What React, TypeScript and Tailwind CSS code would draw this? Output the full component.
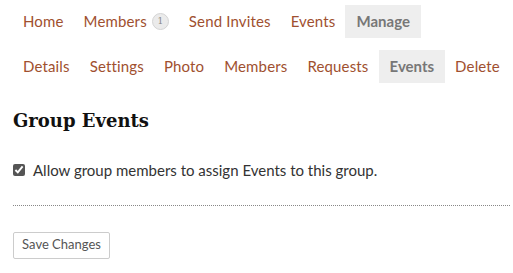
import React from "react";

const sans = "font-['Lato','Liberation_Sans',sans-serif]";

function NavItem({ label, active = false, children }: { label: string; active?: boolean; children?: React.ReactNode }) {
  return (
    <a
      className={
        active
          ? "flex h-[33px] items-center bg-[#eeeeee] px-[11px] font-bold text-[#777777]"
          : "flex h-[33px] items-center px-[10px] tracking-[0.15px] text-[#a0502f]"
      }
    >
      {label}
      {children}
    </a>
  );
}

export default function App() {
  return (
    <div className={`${sans} w-[513px] h-[273px] bg-white text-[15px] pl-[13px] pr-[3px]`}>
      <nav className="flex items-center pt-[5px] h-[38px]">
        <NavItem label="Home" />
        <NavItem label="Members">
          <span className="ml-[5px] flex h-[17px] w-[17px] items-center justify-center rounded-full border border-[#d4d4d4] bg-[#ebebeb] text-[9px] tracking-normal text-[#888] font-['DejaVu_Serif',serif]">
            1
          </span>
        </NavItem>
        <NavItem label="Send Invites" />
        <NavItem label="Events" />
        <NavItem label="Manage" active />
      </nav>
      <nav className="flex items-center mt-[11px] h-[34px]">
        <NavItem label="Details" />
        <NavItem label="Settings" />
        <NavItem label="Photo" />
        <NavItem label="Members" />
        <NavItem label="Requests" />
        <NavItem label="Events" active />
        <NavItem label="Delete" />
      </nav>
      <h2 className="mt-[26px] font-['DejaVu_Serif',serif] text-[18px] font-bold leading-[24px] text-[#111111]">
        Group Events
      </h2>
      <label className="mt-[26px] flex items-center gap-[8px] text-[15px] text-[#333333]">
        <input type="checkbox" defaultChecked className="m-0 h-[12px] w-[12px] accent-[#555]" />
        <span>Allow group members to assign Events to this group.</span>
      </label>
      <div className="mt-[23px] border-t border-dotted border-[#888]" />
      <button className="mt-[26px] flex h-[27px] w-[97px] items-center justify-center rounded-[2px] border border-[#cccccc] bg-white text-[13px] text-[#555555]">
        Save Changes
      </button>
    </div>
  );
}
